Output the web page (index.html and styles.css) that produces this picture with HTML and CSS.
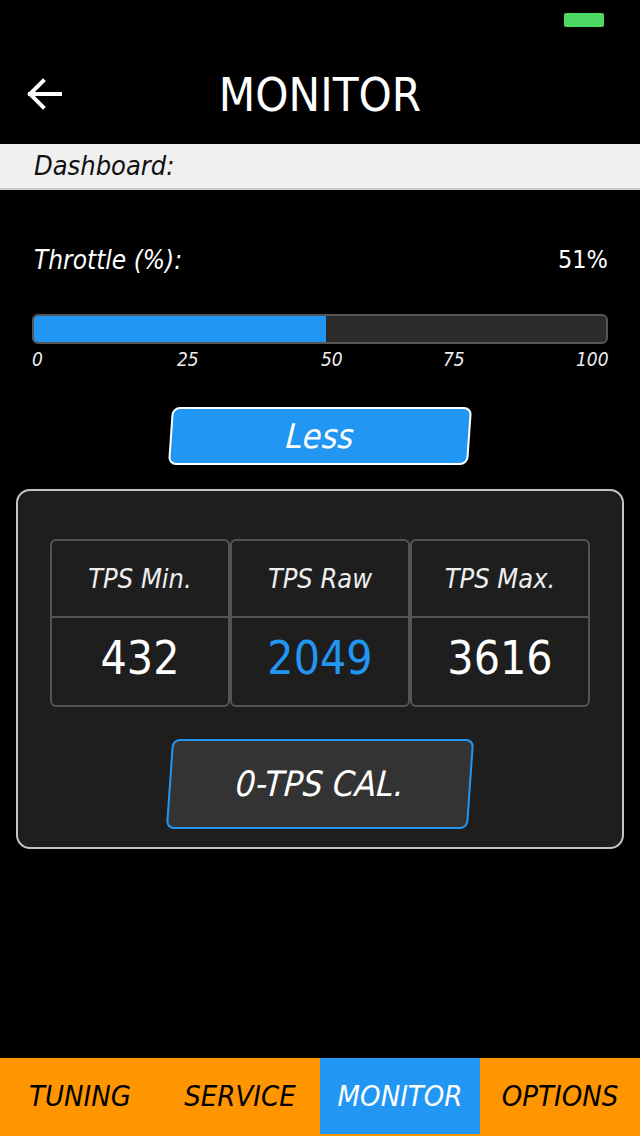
FILE: index.html
```html
<!DOCTYPE html>
<html lang="en">

<head>
    <meta charset="UTF-8">
    <meta name="viewport" content="width=device-width, initial-scale=1.0">
    <title>Monitor</title>
    <link rel="stylesheet" href="styles.css">
</head>

<body>
    <div class="status-bar">
        <div class="battery"></div>
    </div>

    <div class="header">
        <a href="#" class="back-btn">
            <svg width="36" height="32" viewBox="0 0 36 32">
                <path d="M4 16 H34 M17 3 L4 16 L17 29" fill="none" stroke="#fff" stroke-width="4" stroke-linecap="square"/>
            </svg>
        </a>
        <h1>MONITOR</h1>
        <span></span>
    </div>

    <div class="section-bar">Dashboard:</div>

    <div class="main">
        <div class="throttle-row">
            <span class="throttle-label">Throttle (%):</span>
            <span class="throttle-value">51%</span>
        </div>

        <div class="progress">
            <div class="progress-fill" style="width: 51%"></div>
        </div>
        <div class="ticks">
            <span>0</span>
            <span>25</span>
            <span>50</span>
            <span>75</span>
            <span>100</span>
        </div>

        <div class="btn-row">
            <button class="btn btn-less">Less</button>
        </div>

        <div class="panel">
            <div class="tps-table">
                <div class="tps-col">
                    <div class="tps-head">TPS Min.</div>
                    <div class="tps-val">432</div>
                </div>
                <div class="tps-col">
                    <div class="tps-head">TPS Raw</div>
                    <div class="tps-val raw">2049</div>
                </div>
                <div class="tps-col">
                    <div class="tps-head">TPS Max.</div>
                    <div class="tps-val">3616</div>
                </div>
            </div>
            <div class="btn-row">
                <button class="btn btn-cal">0-TPS CAL.</button>
            </div>
        </div>
    </div>

    <div class="tab-bar">
        <a href="#" class="tab">TUNING</a>
        <a href="#" class="tab">SERVICE</a>
        <a href="#" class="tab active">MONITOR</a>
        <a href="#" class="tab">OPTIONS</a>
    </div>
</body>

</html>
```

FILE: styles.css
```css
body {
    font-family: "Liberation Sans Narrow", "DejaVu Sans Condensed", "Liberation Sans", sans-serif;
    background-color: #000;
    color: #fff;
    margin: 0;
    height: 1136px;
    display: flex;
    flex-direction: column;
}

.status-bar {
    height: 44px;
    display: flex;
    justify-content: flex-end;
    padding: 13px 36px 0 0;
    box-sizing: border-box;
}

.battery {
    width: 40px;
    height: 14px;
    background-color: #4cd964;
    border-radius: 2px;
}

.header {
    height: 100px;
    display: grid;
    grid-template-columns: 90px 1fr 90px;
    align-items: center;
}

.back-btn {
    padding-left: 26px;
    display: flex;
    align-items: center;
}

.header h1 {
    margin: 0;
    text-align: center;
    font-size: 47px;
    font-weight: normal;
}

.section-bar {
    height: 46px;
    background-color: #f0f0f0;
    border-bottom: 2px solid #c8c8c8;
    box-sizing: border-box;
    color: #111;
    font-style: italic;
    font-size: 27px;
    line-height: 44px;
    padding-left: 34px;
}

.main {
    padding: 0 32px;
    flex: 1;
}

.throttle-row {
    margin-top: 52px;
    display: flex;
    justify-content: space-between;
    align-items: center;
    line-height: 36px;
    font-size: 26px;
    padding-left: 2px;
}

.throttle-label {
    font-style: italic;
}

.throttle-value {
    font-size: 25px;
}

.progress {
    margin-top: 36px;
    height: 30px;
    border: 2px solid #555;
    border-radius: 6px;
    background-color: #2b2b2b;
    box-sizing: border-box;
    overflow: hidden;
}

.progress-fill {
    height: 100%;
    background-color: #2196F3;
}

.ticks {
    display: grid;
    grid-template-columns: 145px 144px 122px 133px 1fr;
    margin-top: 5px;
    font-size: 19px;
    font-style: italic;
    line-height: 20px;
    color: #eee;
}

.ticks span:last-child {
    text-align: right;
}

.btn-row {
    display: flex;
    justify-content: center;
}

.btn {
    font-family: inherit;
    font-style: italic;
    color: #fff;
    border-radius: 8px;
    transform: skewX(-4deg);
    cursor: pointer;
}

.btn-less {
    margin-top: 38px;
    width: 300px;
    height: 58px;
    background-color: #2196F3;
    border: 2px solid #fff;
    font-size: 34px;
}

.panel {
    margin: 24px -16px 0;
    height: 360px;
    box-sizing: border-box;
    background-color: #1e1e1e;
    border: 2px solid #c4c4c4;
    border-radius: 14px;
    padding: 48px 32px 0;
}

.tps-table {
    display: grid;
    grid-template-columns: repeat(3, 1fr);
}

.tps-col {
    border: 2px solid #555;
    border-radius: 6px;
}

.tps-head {
    height: 75px;
    border-bottom: 2px solid #555;
    display: flex;
    align-items: center;
    justify-content: center;
    font-style: italic;
    font-size: 27px;
    color: #eee;
}

.tps-val {
    height: 87px;
    padding-bottom: 8px;
    box-sizing: border-box;
    display: flex;
    align-items: center;
    justify-content: center;
    font-size: 46px;
}

.tps-val.raw {
    color: #2196F3;
}

.btn-cal {
    margin-top: 32px;
    width: 302px;
    height: 90px;
    background-color: #333;
    border: 2px solid #2196F3;
    font-size: 35px;
}

.tab-bar {
    height: 78px;
    display: grid;
    grid-template-columns: repeat(4, 1fr);
    background-color: #ff9600;
}

.tab {
    display: flex;
    align-items: center;
    justify-content: center;
    margin-bottom: 2px;
    color: #000;
    text-decoration: none;
    font-style: italic;
    font-size: 29px;
}

.tab.active {
    background-color: #2196F3;
    color: #fff;
}
```
